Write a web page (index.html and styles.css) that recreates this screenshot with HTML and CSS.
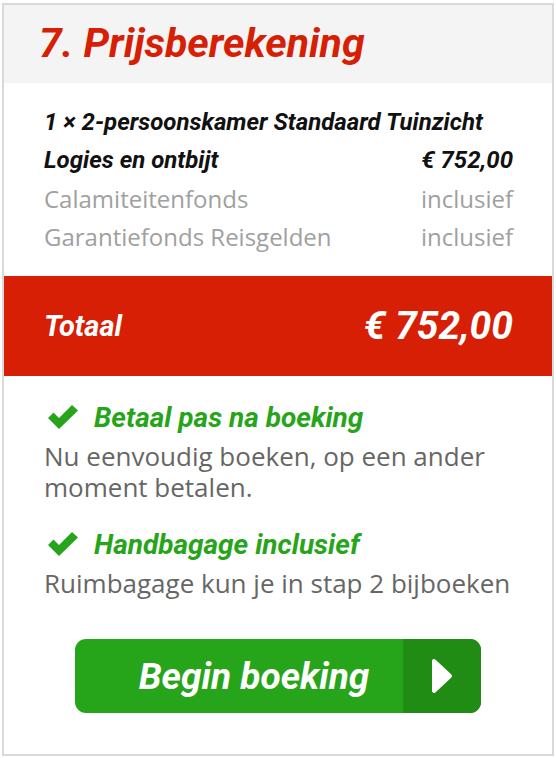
FILE: index.html
```html
<!DOCTYPE html>
<html lang="nl">
<head>
    <meta charset="UTF-8">
    <meta name="viewport" content="width=device-width, initial-scale=1.0">
    <title>Prijsberekening</title>
    <link rel="stylesheet" href="styles.css">
</head>
<body>

<div class="price-box">
    <header class="price-header">
        <h1>7. Prijsberekening</h1>
    </header>

    <section class="price-lines">
        <div class="room">1 × 2-persoonskamer Standaard Tuinzicht</div>
        <div class="line line-main">
            <span>Logies en ontbijt</span>
            <span>€ 752,00</span>
        </div>
        <div class="line line-muted">
            <span>Calamiteitenfonds</span>
            <span>inclusief</span>
        </div>
        <div class="line line-muted">
            <span>Garantiefonds Reisgelden</span>
            <span>inclusief</span>
        </div>
    </section>

    <div class="total">
        <span class="total-label">Totaal</span>
        <span class="total-amount">€ 752,00</span>
    </div>

    <!-- USP's -->
    <section class="usps">
        <div class="usp">
            <div class="usp-title">
                <svg class="check" viewBox="0 0 32 24"><path d="M1 13 L6.5 7.5 L12 13 L25 0 L31 5.5 L12 24 Z" fill="#27a51a"/></svg>
                Betaal pas na boeking
            </div>
            <p>Nu eenvoudig boeken, op een ander moment betalen.</p>
        </div>
        <div class="usp">
            <div class="usp-title">
                <svg class="check" viewBox="0 0 32 24"><path d="M1 13 L6.5 7.5 L12 13 L25 0 L31 5.5 L12 24 Z" fill="#27a51a"/></svg>
                Handbagage inclusief
            </div>
            <p>Ruimbagage kun je in stap 2 bijboeken</p>
        </div>
    </section>

    <div class="actions">
        <button class="book-btn">
            <span class="book-label">Begin boeking</span>
            <span class="book-arrow">
                <svg viewBox="0 0 22 36" width="22" height="36"><path d="M3 3 L19 18 L3 33 Z" fill="#fff" stroke="#fff" stroke-width="4" stroke-linejoin="round"/></svg>
            </span>
        </button>
    </div>
</div>

</body>
</html>
```

FILE: styles.css
```css
body {
    margin: 0;
    font-family: "Open Sans", Arial, sans-serif;
    background-color: #fff;
}

.price-box {
    margin: 3px 2px 2px 2px;
    border: 2px solid #d9d9d9;
    height: 753px;
    box-sizing: border-box;
    background-color: white;
}

.price-header {
    background-color: #f4f4f4;
    height: 78px;
    padding: 0 35px;
}

/* bold italic for all headings */
.price-header h1,
.room, .line-main,
.total,
.usp-title,
.book-label {
    font-family: Roboto, "DejaVu Sans", sans-serif;
    font-style: italic;
    font-weight: bold;
    white-space: nowrap;
}

.price-header h1 {
    margin: 0;
    padding-top: 14px;
    font-size: 41px;
    color: #d61f05;
}

.price-lines {
    padding: 20px 39px 0 40px;
    height: 193px;
    box-sizing: border-box;
}

.room, .line-main {
    font-size: 24px;
    color: #111;
    height: 38px;
}

.line {
    display: flex;
    justify-content: space-between;
    align-items: center;
}

.room {
    display: flex;
    align-items: center;
}

.line-muted {
    font-size: 24px;
    color: #a0a0a0;
    height: 38px;
}

.total {
    background-color: #d61f05;
    height: 100px;
    display: flex;
    justify-content: space-between;
    align-items: center;
    padding: 0 39px 0 40px;
    color: white;
}

.total-label {
    font-size: 29px;
}

.total-amount {
    font-size: 39px;
}

.usps {
    padding: 22px 39px 0 40px;
}

.usp {
    margin-bottom: 22px;
}

.usp-title {
    display: flex;
    align-items: center;
    gap: 15px;
    font-size: 28px;
    color: #27a51a;
    height: 38px;
    margin-bottom: 5px;
}

.check {
    width: 32px;
    height: 24px;
    margin-left: 3px;
}

.usp p {
    margin: 0;
    font-size: 26px;
    line-height: 31px;
    color: #666;
}

.actions {
    display: flex;
    justify-content: center;
    padding-top: 18px;
}

.book-btn {
    display: flex;
    width: 406px;
    height: 74px;
    border: none;
    border-radius: 11px;
    overflow: hidden;
    padding: 0;
    background-color: #27a51a;
    cursor: pointer;
}

.book-label {
    flex: 1;
    display: flex;
    align-items: center;
    justify-content: center;
    color: white;
    font-size: 37px;
    padding-left: 30px;
}

.book-arrow {
    width: 78px;
    background-color: #218c14;
    display: flex;
    align-items: center;
    justify-content: center;
}
```
